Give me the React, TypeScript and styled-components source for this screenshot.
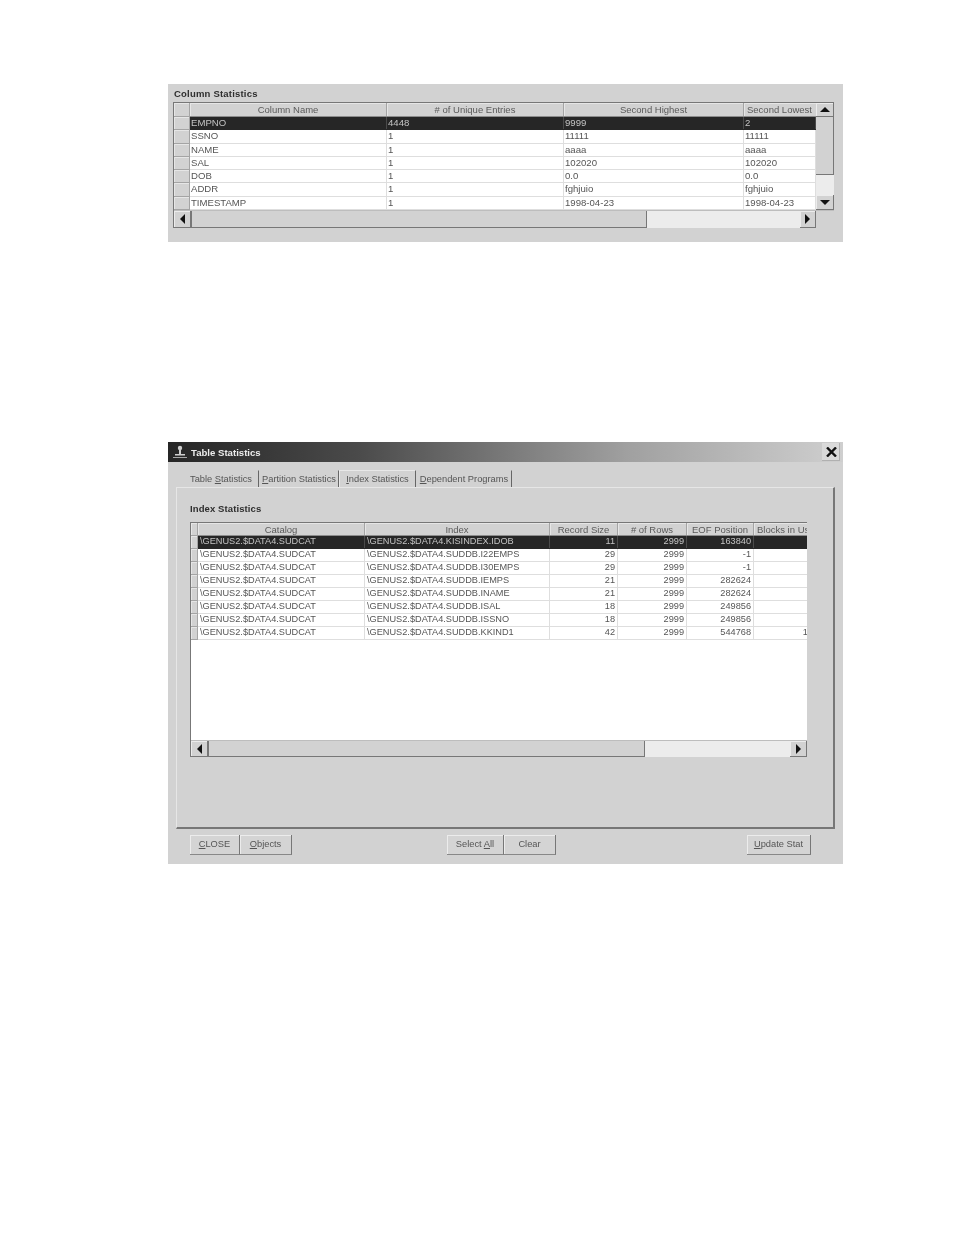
import React from "react";
import styled, { createGlobalStyle } from "styled-components";

const GlobalStyle = createGlobalStyle`
  html, body {
    margin: 0;
    padding: 0;
    background: #fff;
  }
  body {
    font-family: "Liberation Sans", Arial, sans-serif;
    font-size: 10px;
    color: #555;
  }
`;

const Page = styled.div`
  width: 954px;
  height: 1235px;
  padding: 84px 0 0 168px;
  box-sizing: border-box;
  overflow: hidden;
  filter: blur(0.55px);
`;

const Panel = styled.section<{ $height: number }>`
  width: 675px;
  height: ${(p) => p.$height}px;
  background: #d2d2d2;
  display: flex;
  flex-direction: column;
  box-sizing: border-box;
`;

const ColumnPanel = styled(Panel)`
  padding: 4px 9px 0 5px;
  gap: 2px;
`;

const DialogPanel = styled(Panel)`
  margin-top: 200px;
`;

const GroupTitle = styled.h3`
  margin: 0;
  font-size: 9.5px;
  line-height: 12px;
  font-weight: 700;
  color: #2e2e2e;
  letter-spacing: 0.1px;
`;

const ColumnTitle = styled(GroupTitle)`
  padding-left: 1px;
  letter-spacing: 0.2px;
`;

const Grid = styled.div<{ $width: number; $height: number }>`
  width: ${(p) => p.$width}px;
  height: ${(p) => p.$height}px;
  box-sizing: border-box;
  border-top: 1px solid #777;
  border-left: 1px solid #777;
  display: flex;
  flex-direction: column;
  background: #fff;
`;

const GridTop = styled.div`
  display: flex;
  flex: 1;
  min-height: 0;
`;

const GridBody = styled.div`
  flex: 1;
  min-width: 0;
  overflow: hidden;
  background: #fff;
`;

const Row = styled.div<{ $cols: string; $h: number; $dark?: boolean }>`
  display: grid;
  grid-template-columns: ${(p) => p.$cols};
  height: ${(p) => p.$h}px;
  background: ${(p) => (p.$dark ? "#262626" : "#fff")};
  color: ${(p) => (p.$dark ? "#c4c4c4" : "#555")};
  box-sizing: border-box;
  border-bottom: 1px solid ${(p) => (p.$dark ? "#262626" : "#dedede")};
`;

const HeadRow = styled(Row)`
  background: #d2d2d2;
  color: #5a5a5a;
  border-bottom: 1px solid #8c8c8c;
`;

const Cell = styled.div<{ $dark?: boolean }>`
  padding: 0 3px 0 1px;
  line-height: 12px;
  font-size: 9.6px;
  white-space: nowrap;
  overflow: hidden;
  border-right: 1px solid ${(p) => (p.$dark ? "#4a4a4a" : "#dedede")};
`;

const IndexCell = styled(Cell)<{ $right?: boolean }>`
  padding: 0 2px 0 2px;
  line-height: 11px;
  font-size: 9.2px;
  text-align: ${(p) => (p.$right ? "right" : "left")};
`;

const HeadCell = styled.div`
  text-align: center;
  line-height: 13px;
  font-size: 9.5px;
  white-space: nowrap;
  overflow: hidden;
  border-right: 1px solid #a4a4a4;
  box-shadow: inset 1px 1px 0 #e6e6e6;
`;

const ClipHeadCell = styled(HeadCell)`
  text-align: left;
  padding-left: 3px;
  border-right: 0;
`;

const Gutter = styled.div<{ $width: number }>`
  width: ${(p) => p.$width}px;
  flex: none;
  background: #fff;
  display: flex;
  flex-direction: column;
`;

const GutterCell = styled.div<{ $h: number }>`
  height: ${(p) => p.$h}px;
  flex: none;
  box-sizing: border-box;
  background: #d2d2d2;
  border-bottom: 1px solid #a4a4a4;
  border-right: 1px solid #a4a4a4;
  box-shadow: inset 1px 1px 0 #e6e6e6;
`;

const ScrollButton = styled.div<{ $w: number; $h: number }>`
  width: ${(p) => p.$w}px;
  height: ${(p) => p.$h}px;
  flex: none;
  box-sizing: border-box;
  background: #d2d2d2;
  border-right: 1px solid #777;
  border-bottom: 1px solid #777;
  box-shadow: inset 1px 1px 0 #ececec;
  display: flex;
  align-items: center;
  justify-content: center;
`;

const Arrow = styled.span<{ $dir: "up" | "down" | "left" | "right" }>`
  width: 0;
  height: 0;
  border-style: solid;
  border-color: transparent;
  ${(p) =>
    p.$dir === "up"
      ? "border-width: 0 5px 5px; border-bottom-color: #111;"
      : p.$dir === "down"
      ? "border-width: 5px 5px 0; border-top-color: #111;"
      : p.$dir === "left"
      ? "border-width: 5px 5px 5px 0; border-right-color: #111;"
      : "border-width: 5px 0 5px 5px; border-left-color: #111;"}
`;

const VBar = styled.div`
  width: 18px;
  flex: none;
  display: flex;
  flex-direction: column;
  background: #ececec;
`;

const VThumb = styled.div`
  height: 58px;
  flex: none;
  box-sizing: border-box;
  background: #d2d2d2;
  border-right: 1px solid #777;
  border-bottom: 1px solid #777;
`;

const VTrack = styled.div`
  flex: 1;
`;

const HBar = styled.div<{ $h: number }>`
  height: ${(p) => p.$h}px;
  flex: none;
  display: flex;
  background: #ececec;
  border-top: 1px solid #bdbdbd;
  box-sizing: border-box;
`;

const HThumb = styled.div<{ $w: number }>`
  width: ${(p) => p.$w}px;
  flex: none;
  box-sizing: border-box;
  background: #d2d2d2;
  border-right: 1px solid #777;
  border-bottom: 1px solid #777;
  border-left: 1px solid #777;
`;

const HTrack = styled.div`
  flex: 1;
`;

const Corner = styled.div`
  width: 18px;
  flex: none;
  background: #d2d2d2;
`;

const TitleBar = styled.header`
  height: 20px;
  flex: none;
  display: flex;
  align-items: center;
  background: linear-gradient(90deg, #262626 0%, #4a4a4a 28%, #a0a0a0 68%, #cfcfcf 100%);
  padding-right: 3px;
  box-sizing: border-box;
`;

const TitleIcon = styled.svg`
  width: 17px;
  height: 16px;
  margin: 0 2px 0 4px;
  flex: none;
`;

const TitleText = styled.span`
  flex: 1;
  color: #ececec;
  font-weight: 700;
  font-size: 9.6px;
`;

const CloseButton = styled.div`
  width: 18px;
  height: 18px;
  background: #dadada;
  box-shadow: inset -1px -1px 0 #b0b0b0;
  display: flex;
  align-items: center;
  justify-content: center;
`;

const Tabs = styled.nav`
  display: flex;
  align-items: flex-end;
  height: 25px;
  flex: none;
  padding: 0 0 0 15px;
  box-sizing: border-box;
`;

const Tab = styled.div<{ $w: number; $active?: boolean }>`
  width: ${(p) => p.$w}px;
  flex: none;
  height: 17px;
  line-height: 17px;
  box-sizing: border-box;
  text-align: center;
  font-size: 9.3px;
  white-space: nowrap;
  border-right: 1.5px solid #666;
  border-top: 1px solid ${(p) => (p.$active ? "#e8e8e8" : "transparent")};
  border-left: 1px solid ${(p) => (p.$active ? "#e8e8e8" : "transparent")};
`;

const Frame = styled.div`
  height: 342px;
  flex: none;
  margin: 0 8px;
  box-sizing: border-box;
  border-top: 1px solid #e6e6e6;
  border-left: 1px solid #e6e6e6;
  border-right: 2px solid #777;
  border-bottom: 2px solid #777;
  padding: 15px 0 0 13px;
  display: flex;
  flex-direction: column;
  gap: 7px;
`;

const ButtonBar = styled.footer`
  flex: 1;
  display: flex;
  align-items: flex-start;
  padding: 6px 32px 0 22px;
`;

const ButtonGroup = styled.div`
  display: flex;
`;

const ButtonGroupCenter = styled(ButtonGroup)`
  margin: 0 191px 0 155px;
`;

const Btn = styled.div<{ $w: number }>`
  width: ${(p) => p.$w}px;
  height: 20px;
  line-height: 19px;
  text-align: center;
  font-size: 9.3px;
  box-sizing: border-box;
  background: #d4d4d4;
  border-right: 1px solid #777;
  border-bottom: 1px solid #888;
  box-shadow: inset 1px 1px 0 #ececec;
`;

const columnCols = "197px 177px 180px 72px";
const columnRows = [
  ["EMPNO", "4448", "9999", "2"],
  ["SSNO", "1", "11111", "11111"],
  ["NAME", "1", "aaaa", "aaaa"],
  ["SAL", "1", "102020", "102020"],
  ["DOB", "1", "0.0", "0.0"],
  ["ADDR", "1", "fghjuio", "fghjuio"],
  ["TIMESTAMP", "1", "1998-04-23", "1998-04-23"],
];

const indexCols = "167px 185px 68px 69px 67px 62px";
const indexRows = [
  ["KISINDEX.IDOB", "11", "2999", "163840", ""],
  ["SUDDB.I22EMPS", "29", "2999", "-1", ""],
  ["SUDDB.I30EMPS", "29", "2999", "-1", ""],
  ["SUDDB.IEMPS", "21", "2999", "282624", ""],
  ["SUDDB.INAME", "21", "2999", "282624", ""],
  ["SUDDB.ISAL", "18", "2999", "249856", ""],
  ["SUDDB.ISSNO", "18", "2999", "249856", ""],
  ["SUDDB.KKIND1", "42", "2999", "544768", "17"],
];

export default function App() {
  return (
    <Page>
      <GlobalStyle />
      <ColumnPanel $height={158}>
        <ColumnTitle>Column Statistics</ColumnTitle>
        <Grid $width={661} $height={126}>
          <GridTop>
            <Gutter $width={16}>
              <GutterCell $h={14} />
              {columnRows.map((r) => (
                <GutterCell key={r[0]} $h={13.3} />
              ))}
            </Gutter>
            <GridBody>
              <HeadRow $cols={columnCols} $h={14}>
                <HeadCell>Column Name</HeadCell>
                <HeadCell># of Unique Entries</HeadCell>
                <HeadCell>Second Highest</HeadCell>
                <ClipHeadCell>Second Lowest</ClipHeadCell>
              </HeadRow>
              {columnRows.map((r, i) => (
                <Row key={r[0]} $cols={columnCols} $h={13.3} $dark={i === 0}>
                  {r.map((c, j) => (
                    <Cell key={j} $dark={i === 0}>
                      {c}
                    </Cell>
                  ))}
                </Row>
              ))}
            </GridBody>
            <VBar>
              <ScrollButton $w={18} $h={14}>
                <Arrow $dir="up" />
              </ScrollButton>
              <VThumb />
              <VTrack />
              <ScrollButton $w={18} $h={15}>
                <Arrow $dir="down" />
              </ScrollButton>
            </VBar>
          </GridTop>
          <HBar $h={18}>
            <ScrollButton $w={17} $h={17}>
              <Arrow $dir="left" />
            </ScrollButton>
            <HThumb $w={456} />
            <HTrack />
            <ScrollButton $w={16} $h={17}>
              <Arrow $dir="right" />
            </ScrollButton>
            <Corner />
          </HBar>
        </Grid>
      </ColumnPanel>

      <DialogPanel $height={422}>
        <TitleBar>
          <TitleIcon viewBox="0 0 17 16">
            <circle cx="8" cy="4" r="2.2" fill="#cfcfcf" />
            <path d="M7 6h2v5H7zM3 10h10v1.5H3z" fill="#cfcfcf" />
            <path d="M1 13h14v1H1z" fill="#a8a8a8" />
          </TitleIcon>
          <TitleText>Table Statistics</TitleText>
          <CloseButton>
            <svg width="11" height="10" viewBox="0 0 11 10">
              <path d="M1 0.5l9 9M10 0.5l-9 9" stroke="#111" strokeWidth="2.4" />
            </svg>
          </CloseButton>
        </TitleBar>
        <Tabs>
          <Tab $w={76}>
            Table <u>S</u>tatistics
          </Tab>
          <Tab $w={80}>
            <u>P</u>artition Statistics
          </Tab>
          <Tab $w={77} $active>
            <u>I</u>ndex Statistics
          </Tab>
          <Tab $w={96}>
            <u>D</u>ependent Programs
          </Tab>
        </Tabs>
        <Frame>
          <GroupTitle>Index Statistics</GroupTitle>
          <Grid $width={617} $height={235}>
            <GridTop>
              <Gutter $width={7}>
                <GutterCell $h={13} />
                {indexRows.map((_, i) => (
                  <GutterCell key={i} $h={13} />
                ))}
              </Gutter>
              <GridBody>
                <HeadRow $cols={indexCols} $h={13}>
                  <HeadCell>Catalog</HeadCell>
                  <HeadCell>Index</HeadCell>
                  <HeadCell>Record Size</HeadCell>
                  <HeadCell># of Rows</HeadCell>
                  <HeadCell>EOF Position</HeadCell>
                  <ClipHeadCell>Blocks in Use</ClipHeadCell>
                </HeadRow>
                {indexRows.map((r, i) => (
                  <Row key={i} $cols={indexCols} $h={13} $dark={i === 0}>
                    <IndexCell $dark={i === 0}>\GENUS2.$DATA4.SUDCAT</IndexCell>
                    <IndexCell $dark={i === 0}>\GENUS2.$DATA4.{r[0]}</IndexCell>
                    {r.slice(1).map((c, j) => (
                      <IndexCell key={j} $right $dark={i === 0}>
                        {c}
                      </IndexCell>
                    ))}
                  </Row>
                ))}
              </GridBody>
            </GridTop>
            <HBar $h={17}>
              <ScrollButton $w={17} $h={16}>
                <Arrow $dir="left" />
              </ScrollButton>
              <HThumb $w={437} />
              <HTrack />
              <ScrollButton $w={17} $h={16}>
                <Arrow $dir="right" />
              </ScrollButton>
            </HBar>
          </Grid>
        </Frame>
        <ButtonBar>
          <ButtonGroup>
            <Btn $w={50}>
              <u>C</u>LOSE
            </Btn>
            <Btn $w={52}>
              <u>O</u>bjects
            </Btn>
          </ButtonGroup>
          <ButtonGroupCenter>
            <Btn $w={57}>
              Select <u>A</u>ll
            </Btn>
            <Btn $w={52}>Clear</Btn>
          </ButtonGroupCenter>
          <ButtonGroup>
            <Btn $w={64}>
              <u>U</u>pdate Stat
            </Btn>
          </ButtonGroup>
        </ButtonBar>
      </DialogPanel>
    </Page>
  );
}
